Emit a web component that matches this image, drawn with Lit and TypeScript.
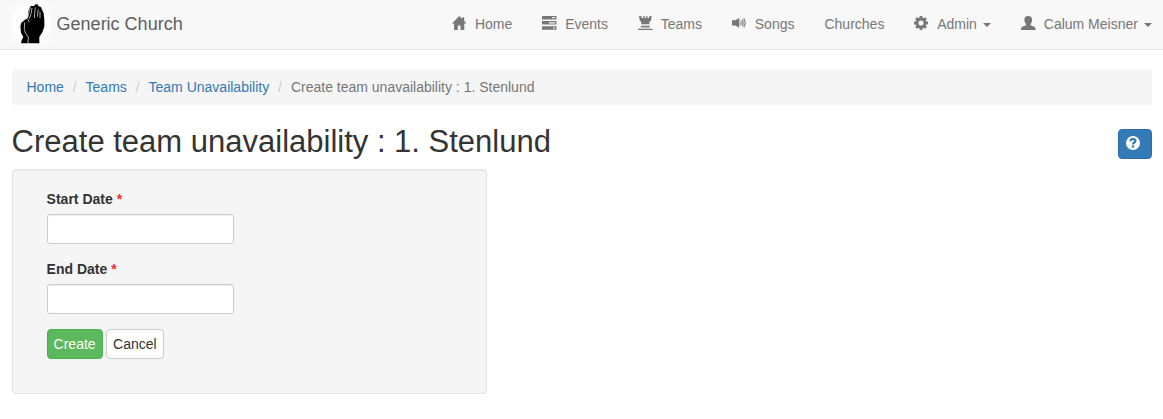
import { LitElement, html, css, svg, nothing } from "lit";
import { customElement } from "lit/decorators.js";

const icons: Record<string, unknown> = {
  home: svg`<path d="M7.3 0 0 7.6h2.1v6.4h3.7V9.4h2.7V14h3.8V7.6H14.6L12.2 5.1V1.2h-1.9v1.9z"/>`,
  events: svg`<path fill-rule="evenodd" d="M.7 0h13.2q.6 0 .6.6v2.3q0 .6-.6.6H.7q-.7 0-.7-.6V.6Q0 0 .7 0zM10 1.2v1.1h3.3V1.2zM.7 5.1h13.2q.6 0 .6.6V8q0 .6-.6.6H.7Q0 8.600 0 8V5.700q0-.6.7-.6zM7 6.300v1.1h6.300V6.300zM.7 10.300h13.200q.6 0 .6.6v2.300q0 .6-.6.6H.7q-.7 0-.7-.6v-2.300q0-.6.7-.6zM11 11.500v1.100h2.300v-1.100z"/>`,
  teams: svg`<path d="M1 0H3.200L3.700 2H5.300V0H6.600V2H8.100V0H9.400V2H11L11.500 0H13.700L12.900 4.800 11.400 5.800V8.200H3.300V5.800L1.800 4.800zM3.300 8.900H11.400L12 11.500H2.700zM0 12.800h14.600V14H0z"/><path stroke="#f8f8f8" stroke-width=".8" d="M3 9.600h8.700"/>`,
  songs: svg`<path d="M0 4.200h3.200L7.300 1.900v9.900L3.200 9.500H0z"/><path fill="none" stroke="currentColor" stroke-width="1.100" d="M8.600 4.800q1.300 2.200 0 4.200M10.100 3.600q2.200 3.300 0 6.600M11.700 2.400q3 4.500 0 9"/>`,
  admin: svg`<path fill-rule="evenodd" d="M5.700 0h2.600l.4 2 .6.3L11 1.200 12.800 3l-1.100 1.700.3.600 2 .4v2.600l-2 .4-.3.600 1.100 1.700L11 12.800l-1.700-1.100-.6.300-.4 2H5.700l-.4-2-.6-.3L3 12.800 1.200 11l1.100-1.700-.3-.6-2-.4V5.700l2-.4.3-.6L1.200 3 3 1.200l1.700 1.100.6-.3zM7 4.500a2.500 2.500 0 1 0 0 5a2.500 2.500 0 1 0 0-5z"/>`,
  user: svg`<path d="M7.200 0C9.700 0 11.200 1.400 11.100 3.700c0 1.700-.5 3.200-1.500 4.300-.3.700 0 1.300.5 1.600l3.200 1.200c1.100.5 1.300 1.200 1.300 3.200H0c0-2 .2-2.700 1.300-3.200l3.200-1.200c.5-.3.8-.9.5-1.600-1-1.100-1.600-2.600-1.600-4.300C3.300 1.400 4.700 0 7.200 0z"/>`,
  help: svg`<circle cx="7" cy="7" r="7"/><path fill="none" stroke="#337ab7" stroke-width="2.200" d="M4.400 5.300C4.400 2.300 9.400 2.300 9.400 5 9.400 6.600 7 6.400 7 8.500"/><path fill="#337ab7" d="M5.800 9.400h2.400v2.200H5.800z"/>`,
};

const icon = (name: string) =>
  html`<svg class="icon" viewBox="0 0 14 14" aria-hidden="true">${icons[name]}</svg>`;

const nav = [
  { label: "Home", icon: "home" },
  { label: "Events", icon: "events" },
  { label: "Teams", icon: "teams" },
  { label: "Songs", icon: "songs" },
  { label: "Churches" },
  { label: "Admin", icon: "admin", menu: true },
  { label: "Calum Meisner", icon: "user", menu: true },
];

@customElement("app-root")
export class AppRoot extends LitElement {
  static styles = css`
    :host {
      display: block;
      min-height: 419px;
      background: #fff;
      color: #333;
      font: 14px/20px "Liberation Sans", Arial, sans-serif;
    }
    * { box-sizing: border-box; }
    a { color: inherit; text-decoration: none; }
    .navbar {
      display: flex;
      justify-content: space-between;
      height: 50px;
      padding: 0 11px 0 11.600px;
      background: #f8f8f8;
      border-bottom: 1px solid #e7e7e7;
    }
    .brand {
      display: flex;
      gap: 5px;
      padding-top: 4px;
      font-size: 18px;
      line-height: 40px;
      color: #5e5e5e;
    }
    .logo { width: 40px; height: 40px; }
    .menu { display: flex; gap: 30px; padding-top: 14px; color: #777; }
    .item { display: flex; }
    .icon {
      display: block;
      width: 14px;
      height: 14px;
      margin: 2px 8.800px 0 0;
      fill: currentColor;
      overflow: visible;
    }
    .caret {
      width: 8px;
      height: 4px;
      margin: 9px 0 0 6.100px;
      border: 4px solid transparent;
      border-top-color: currentColor;
      border-bottom: 0;
    }
    .page { padding: 19px 11px 0 11.600px; }
    .crumbs {
      display: flex;
      height: 36px;
      padding: 8px 14.900px;
      background: #f5f5f5;
      border-radius: 4px;
      color: #777;
    }
    .crumbs a { color: #337ab7; }
    .sep { padding: 0 8.930px; color: #ccc; }
    .heading {
      display: flex;
      justify-content: space-between;
      align-items: flex-start;
      height: 64px;
      padding-top: 19px;
    }
    h1 { margin: 1px 0 0; font-size: 31px; line-height: 34px; font-weight: 400; }
    .help {
      width: 34px;
      height: 30px;
      margin-top: 5px;
      padding: 6px 7px;
      border: 1px solid #2e6da4;
      border-radius: 4px;
      background: #337ab7;
      color: #fff;
    }
    .help .icon { margin: 0; }
    .well {
      width: 475px;
      height: 225px;
      padding: 19px 34px;
      border: 1px solid #e3e3e3;
      border-radius: 4px;
      background: #f5f5f5;
      box-shadow: inset 0 1px 1px rgba(0, 0, 0, 0.05);
    }
    .field { display: block; height: 70px; font-weight: 700; }
    .required { color: #e33; }
    input {
      display: block;
      width: 187px;
      height: 30px;
      margin-top: 5px;
      padding: 5px 6px;
      border: 1px solid #ccc;
      border-radius: 3px;
      background: #fff;
      box-shadow: inset 0 1px 1px rgba(0, 0, 0, 0.075);
      font: inherit;
    }
    .actions { display: flex; gap: 3.300px; }
    .btn {
      width: 58px;
      height: 30px;
      padding: 0;
      border: 1px solid #ccc;
      border-radius: 4px;
      background: #fff;
      color: #333;
      font: inherit;
      text-align: center;
    }
    .create { width: 56px; background: #5cb85c; border-color: #4cae4c; color: #fff; }
  `;

  render() {
    return html`
      <nav class="navbar">
        <a class="brand">
          <svg class="logo" viewBox="0 0 120 120" aria-hidden="true">
            <rect width="117" height="120" fill="#fafafa" />
            <circle cx="60" cy="60" r="59" fill="#fff" />
            <path d="M27 118 29 108 34 99 27 86 25 66 28 56 38 48 47 43 49 22 54 8 59 5 65 7 71 1 76 1 80 7 87 9 90 17 95 28 97 48 97 68 91 85 82 99 82 118z" />
            <path d="M38 55 37 77 41 88 49 99 48 118M47 42 52 20 56 10M52 44 58 26 60 12M67 42 68 29 70 10M76 38 79 16M84 42 84 23M47 45 52 55" fill="none" stroke="#fff" stroke-width="2" />
          </svg>
          <span>Generic Church</span>
        </a>
        <div class="menu">
          ${nav.map(
            (n) => html`<a class="item">${n.icon ? icon(n.icon) : nothing}<span>${n.label}</span>${n.menu ? html`<span class="caret"></span>` : nothing}</a>`
          )}
        </div>
      </nav>
      <main class="page">
        <div class="crumbs">
          <a>Home</a><span class="sep">/</span><a>Teams</a><span class="sep">/</span><a>Team Unavailability</a><span class="sep">/</span><span>Create team unavailability : 1. Stenlund</span>
        </div>
        <div class="heading">
          <h1>Create team unavailability : 1. Stenlund</h1>
          <a class="help">${icon("help")}</a>
        </div>
        <form class="well">
          <label class="field">Start Date <span class="required">*</span><input /></label>
          <label class="field">End Date <span class="required">*</span><input /></label>
          <div class="actions">
            <button type="button" class="btn create">Create</button>
            <button type="button" class="btn">Cancel</button>
          </div>
        </form>
      </main>
    `;
  }
}
